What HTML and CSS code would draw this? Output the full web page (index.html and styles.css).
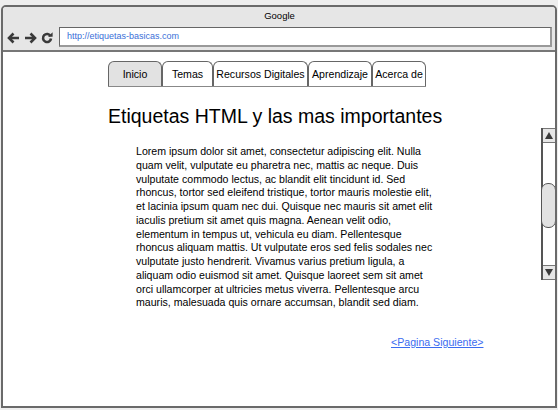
FILE: index.html
```html
<!DOCTYPE html>
<html lang="es">
<head>
<meta charset="utf-8">
<title>Google</title>
<link rel="stylesheet" href="styles.css">
</head>
<body>
<div class="window">
  <div class="titlebar">
    <div class="title">Google</div>
    <div class="navrow">
      <div class="navicons">
        <svg class="icon" width="13" height="12" viewBox="0 0 13 12"><path d="M12 6H3" stroke="#3a3a3a" stroke-width="2.6" fill="none"/><path d="M6.5 1.5L2 6l4.5 4.5" stroke="#3a3a3a" stroke-width="2.6" fill="none" stroke-linejoin="miter"/></svg>
        <svg class="icon" width="13" height="12" viewBox="0 0 13 12"><path d="M1 6h9" stroke="#3a3a3a" stroke-width="2.6" fill="none"/><path d="M6.5 1.5L11 6l-4.5 4.5" stroke="#3a3a3a" stroke-width="2.6" fill="none"/></svg>
        <svg class="icon" width="12" height="12" viewBox="0 0 12 12"><path d="M9.6 4.2A4 4 0 1 0 10 6.5" stroke="#3a3a3a" stroke-width="2.6" fill="none"/><path d="M7 4.8h4.6V0.2z" fill="#3a3a3a"/></svg>
      </div>
      <div class="urlbar">http://etiquetas-basicas.com</div>
    </div>
  </div>
  <div class="content">
    <div class="main">
      <nav class="tabs">
        <div class="tab tab-active">Inicio</div>
        <div class="tab">Temas</div>
        <div class="tab">Recursos Digitales</div>
        <div class="tab">Aprendizaje</div>
        <div class="tab">Acerca de</div>
      </nav>
      <h1 class="heading">Etiquetas HTML y las mas importantes</h1>
      <p class="text">Lorem ipsum dolor sit amet, consectetur adipiscing elit. Nulla quam velit, vulputate eu pharetra nec, mattis ac neque. Duis vulputate commodo lectus, ac blandit elit tincidunt id. Sed rhoncus, tortor sed eleifend tristique, tortor mauris molestie elit, et lacinia ipsum quam nec dui. Quisque nec mauris sit amet elit iaculis pretium sit amet quis magna. Aenean velit odio, elementum in tempus ut, vehicula eu diam. Pellentesque rhoncus aliquam mattis. Ut vulputate eros sed felis sodales nec vulputate justo hendrerit. Vivamus varius pretium ligula, a aliquam odio euismod sit amet. Quisque laoreet sem sit amet orci ullamcorper at ultricies metus viverra. Pellentesque arcu mauris, malesuada quis ornare accumsan, blandit sed diam.</p>
      <a class="next" href="#">&lt;Pagina Siguiente&gt;</a>
    </div>
    <div class="scrollbar">
      <div class="sb-btn"><span class="tri tri-up"></span></div>
      <div class="sb-track"><div class="sb-thumb"></div></div>
      <div class="sb-btn"><span class="tri tri-down"></span></div>
    </div>
  </div>
</div>
</body>
</html>
```
FILE: styles.css
```css
html, body {
  margin: 0;
  padding: 0;
}
body {
  background: #eeeeee;
  padding: 5px 1px 2px 1px;
  font-family: "Liberation Sans", Arial, sans-serif;
  color: #000;
}
.window {
  box-sizing: border-box;
  height: 403px;
  border: 2px solid #6a6a6a;
  border-radius: 5px 5px 0 0;
  background: #fff;
  display: flex;
  flex-direction: column;
  overflow: hidden;
}
.titlebar {
  background: #e6e6e6;
  border-bottom: 2px solid #777;
  padding: 0 3px 3px 4px;
}
.title {
  height: 18px;
  line-height: 18px;
  font-size: 9.5px;
  text-align: center;
}
.navrow {
  margin-top: 2px;
  display: flex;
  align-items: center;
  height: 20px;
}
.navicons {
  display: flex;
  align-items: center;
  gap: 4px;
  width: 52px;
  padding-top: 1px;
}
.icon {
  display: block;
}
.urlbar {
  flex: 1;
  box-sizing: border-box;
  height: 20px;
  background: #fff;
  border: 1px solid #666;
  border-right: 2px solid #999;
  border-bottom: 2px solid #999;
  font-size: 9px;
  line-height: 17px;
  color: #3a6fd8;
  padding-left: 7px;
}
.content {
  flex: 1;
  display: flex;
}
.main {
  flex: 1;
  padding-top: 9px;
}
.tabs {
  display: grid;
  grid-template-columns: 54px 51px 95px 64px 54px;
  margin-left: 105px;
  width: max-content;
  border-bottom: 1px solid #888;
}
.tab {
  box-sizing: border-box;
  height: 25px;
  border: 1px solid #666;
  border-bottom: none;
  border-radius: 6px 6px 0 0;
  font-size: 10.6px;
  line-height: 24px;
  text-align: center;
  white-space: nowrap;
  background: #fff;
}
.tab-active {
  background: #e2e2e2;
}
.heading {
  margin: 18px 0 0 105px;
  font-size: 19.5px;
  font-weight: normal;
  line-height: 22px;
}
.text {
  margin: 18px 0 0 133px;
  width: 299px;
  font-size: 10.6px;
  line-height: 13.75px;
}
.next {
  display: block;
  margin: 26px 0 0 388px;
  width: max-content;
  font-size: 10.6px;
  line-height: 13.75px;
  color: #3b6cf0;
  text-decoration: underline;
}
.scrollbar {
  margin-top: 76px;
  width: 14px;
  height: 152px;
  box-sizing: border-box;
  border-left: 2px solid #555;
  display: flex;
  flex-direction: column;
  background: #fff;
}
.sb-btn {
  height: 13px;
  background: #e6e6e6;
  border-top: 1px solid #777;
  border-bottom: 1px solid #777;
  display: flex;
  align-items: center;
  justify-content: center;
}
.sb-track {
  flex: 1;
  position: relative;
}
.sb-thumb {
  position: absolute;
  left: -2px;
  right: -1px;
  top: 40px;
  height: 45px;
  box-sizing: border-box;
  background: #e2e2e2;
  border: 1px solid #555;
  border-radius: 7px;
}
.tri {
  width: 0;
  height: 0;
  border-left: 4px solid transparent;
  border-right: 4px solid transparent;
}
.tri-up {
  border-bottom: 7px solid #3a3a3a;
}
.tri-down {
  border-top: 7px solid #3a3a3a;
}
```
